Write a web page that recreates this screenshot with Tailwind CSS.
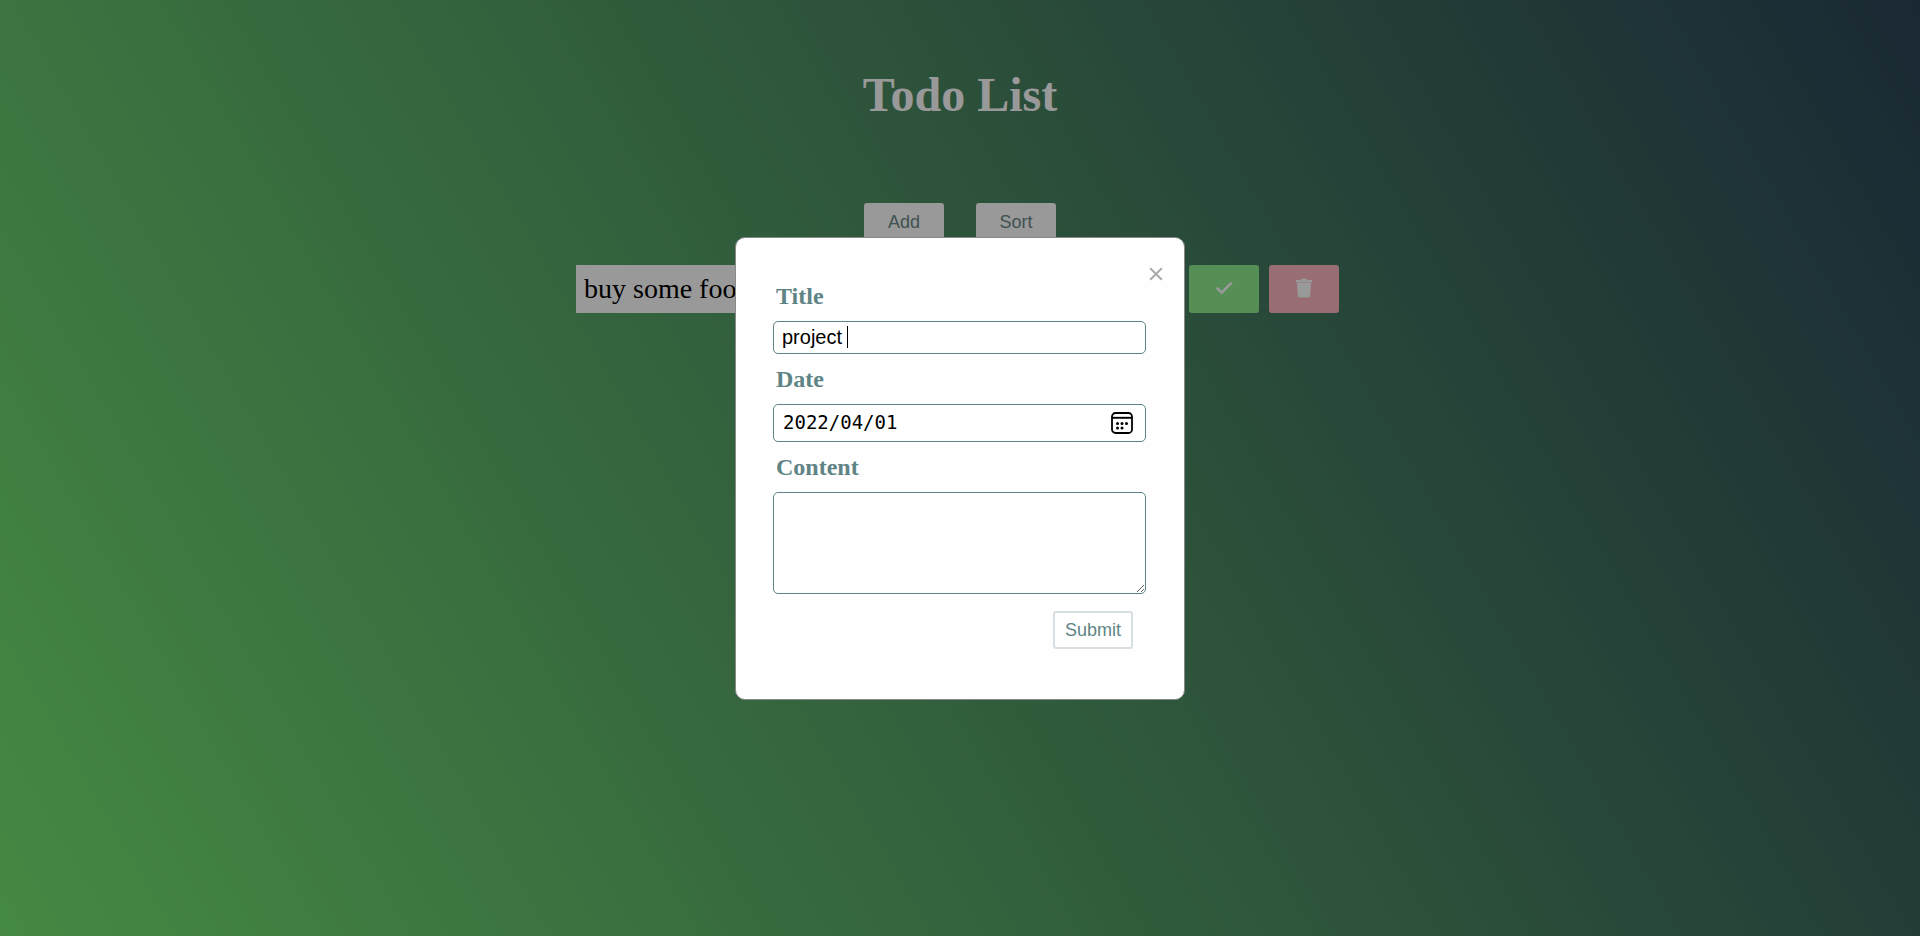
<!DOCTYPE html>
<html lang="en">
<head>
<meta charset="utf-8">
<title>Todo List</title>
<script src="https://cdn.jsdelivr.net/npm/@tailwindcss/browser@4"></script>
</head>
<body class="min-h-screen bg-[linear-gradient(60deg,#73e571,#2c4457)] font-['Liberation_Serif',serif]">
<main class="flex flex-col items-center pt-[65px]">
  <h1 class="text-5xl leading-[60px] font-bold text-white">Todo List</h1>
  <div class="mt-[78px] flex gap-8 font-['Liberation_Sans',sans-serif] text-lg text-[#6a8888]">
    <button type="button" class="h-10 w-20 rounded-[3px] bg-white pb-0.5">Add</button>
    <button type="button" class="h-10 w-20 rounded-[3px] bg-white pb-0.5">Sort</button>
  </div>
  <ul class="mt-[22px] w-2/5">
    <li class="flex gap-[10px] pr-[5px]">
      <p class="h-12 grow bg-white px-2 text-[28px] leading-12 text-black">buy some food</p>
      <button type="button" aria-label="Done" class="flex h-12 w-[70px] items-center justify-center rounded-[3px] bg-[#90ee90] pb-0.5 text-white">
        <svg class="size-[18px]" viewBox="0 0 18 18" fill="none" stroke="currentColor" stroke-width="2.6"><path d="M1.600 8.700 6.600 13.700 16.600 3.700"/></svg>
      </button>
      <button type="button" aria-label="Delete" class="flex h-12 w-[70px] items-center justify-center rounded-[3px] bg-[#ffb6c1] pb-0.5 text-white">
        <svg class="size-[20px]" viewBox="0 0 20 20" fill="currentColor"><path d="M2 2h4.500l.8-1.300h5.400l.8 1.300H18v2.400H2zM3 5h14l-.8 13.200q-.1 1.300-1.500 1.300H5.300q-1.400 0-1.500-1.300z"/></svg>
      </button>
    </li>
  </ul>
</main>

<div class="fixed inset-0 flex items-center justify-center bg-black/40">
  <form role="dialog" aria-label="New todo" class="relative flex w-[450px] flex-col rounded-[10px] border border-[#888] bg-[#fefefe] pt-[43px] pr-[38px] pb-[50px] pl-[37px] text-[#5f8486]">
    <button type="button" aria-label="Close" class="absolute top-[29px] right-[21px] text-[#aaa]">
      <svg class="size-[14px]" viewBox="0 0 14 14" fill="none" stroke="currentColor" stroke-width="2"><path d="M1.200 1.200l11.600 11.600M12.800 1.200l-11.600 11.600"/></svg>
    </button>
    <label for="title" class="px-[3px] text-2xl leading-[30px] font-bold">Title</label>
    <div class="relative mt-[10px] flex">
      <input id="title" type="text" value="project " class="h-[33px] w-full rounded-[5px] border border-[#5f8486] bg-white px-2 font-['Liberation_Sans',sans-serif] text-xl text-black outline-none">
      <span class="absolute top-[5px] left-[74px] h-[22px] w-px bg-black"></span>
    </div>
    <label for="date" class="mt-[10px] px-[3px] text-2xl leading-[30px] font-bold">Date</label>
    <div class="mt-[10px] flex h-[38px] items-center rounded-[5px] border border-[#5f8486] bg-white pr-3 pl-[9px] text-black">
      <input id="date" type="text" value="2022/04/01" class="min-w-0 grow font-['DejaVu_Sans_Mono',monospace] text-[19px] outline-none">
      <button type="button" aria-label="Choose date">
        <svg class="size-[22px]" viewBox="0 0 22 22" fill="none" stroke="currentColor"><rect x="1" y="1" width="20" height="20" rx="3.500" stroke-width="1.800"/><path d="M1 5.800h20" stroke-width="1.900"/><g fill="currentColor" stroke="none"><circle cx="6.500" cy="11.500" r="1.500"/><circle cx="11" cy="11.500" r="1.500"/><circle cx="15.500" cy="11.500" r="1.500"/><circle cx="6.500" cy="16" r="1.500"/><circle cx="11" cy="16" r="1.500"/></g></svg>
      </button>
    </div>
    <label for="content" class="mt-[10px] px-[3px] text-2xl leading-[30px] font-bold">Content</label>
    <textarea id="content" class="mt-[10px] h-[102px] w-full rounded-[5px] border border-[#5f8486] bg-white p-2 font-['Liberation_Sans',sans-serif] text-xl text-black"></textarea>
    <button type="submit" class="mt-[17px] mr-[13px] h-[38px] w-20 self-end rounded-[3px] border-2 border-[#d8dfe3] bg-white font-['Liberation_Sans',sans-serif] text-lg">Submit</button>
  </form>
</div>
</body>
</html>
